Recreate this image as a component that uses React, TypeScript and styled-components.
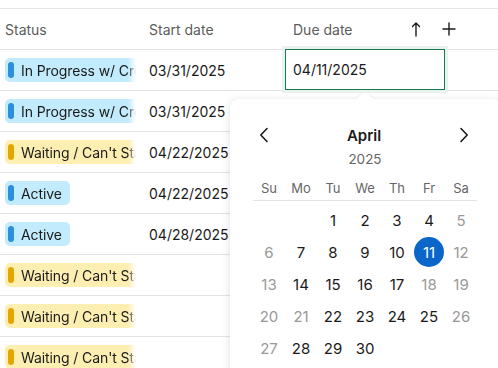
import React from "react";
import styled, {createGlobalStyle} from "styled-components";

const Global = createGlobalStyle`
  html, body {
    margin: 0;
    padding: 0;
    background: #fff;
    font-family: Inter, "Noto Sans", sans-serif;
    color: #1a1a1a;
    overflow: hidden;
  }
`

const Page = styled.div`
  position: relative;
  width: 498px;
  height: 368px;
  overflow: hidden;
  padding-top: 8px;
  box-sizing: border-box;
`

const Grid = styled.div`
  display: grid;
  grid-template-columns: 144px 144px 1fr;
  border-top: 1px solid #e6e6e6;
`

const HeadCell = styled.div`
  height: 40px;
  display: flex;
  align-items: center;
  padding-left: 5px;
  font-size: 14px;
  color: #5c5c5c;
  border-bottom: 1px solid #e3e3e3;
`

const HeadTools = styled.div`
  margin-left: auto;
  display: flex;
  align-items: center;
  gap: 19px;
  padding-right: 42px;
  color: #1a1a1a;
`

const Cell = styled.div`
  height: 40px;
  display: flex;
  align-items: center;
  padding-left: 5px;
  font-size: 14px;
  border-bottom: 1px solid #e3e3e3;
  overflow: hidden;
  white-space: nowrap;
`

const PillClip = styled.div`
  width: 131px;
  overflow: hidden;
  display: flex;
  -webkit-mask-image: linear-gradient(to right, #000 123px, transparent 131px);
  mask-image: linear-gradient(to right, #000 123px, transparent 131px);
`

const Pill = styled.div<{ $tone: "blue" | "yellow" }>`
  flex: none;
  display: flex;
  align-items: center;
  height: 24px;
  padding: 0 8px 0 3px;
  border-radius: 5px;
  box-sizing: border-box;
  background: ${p => p.$tone === "blue" ? "#c2ebfd" : "#fdeeb1"};
`

const PillBar = styled.span<{ $tone: "blue" | "yellow" }>`
  flex: none;
  width: 6px;
  height: 16px;
  border-radius: 3px;
  margin-right: 7px;
  background: ${p => p.$tone === "blue" ? "#2b8fdb" : "#e2a600"};
`

const PillText = styled.span`
  white-space: nowrap;
  color: #1a1a1a;
  letter-spacing: -0.1px;
`

const Editor = styled.div`
  position: absolute;
  left: 285px;
  top: 49px;
  width: 160px;
  height: 41px;
  box-sizing: border-box;
  border: 1px solid #197a52;
  box-shadow: 0 0 0 3px #eaf2ef;
  background: #fff;
  display: flex;
  align-items: center;
  padding-left: 7px;
  font-size: 14px;
  z-index: 3;
`

const Popover = styled.div`
  position: absolute;
  left: 230px;
  top: 99px;
  width: 272px;
  height: 290px;
  background: #fff;
  border-radius: 8px;
  box-shadow: 0 2px 10px rgba(0, 0, 0, 0.12), 0 0 1px rgba(0, 0, 0, 0.1);
  padding: 24px 0 0 23px;
  box-sizing: border-box;
  z-index: 2;

  &::before {
    content: "";
    position: absolute;
    left: 129px;
    top: -6px;
    width: 12px;
    height: 12px;
    background: #fff;
    transform: rotate(45deg);
    box-shadow: -1px -1px 2px rgba(0, 0, 0, 0.05);
  }
`

const Calendar = styled.div`
  width: 224px;
  position: relative;
`

const Nav = styled.div`
  display: flex;
  align-items: center;
  justify-content: space-between;
  height: 24px;
  padding: 0 8px 0 6px;
`

const Month = styled.div`
  font-size: 15px;
  font-weight: 600;
`

const NavButton = styled.div`
  display: flex;
  align-items: center;
  color: #1a1a1a;
`

const Year = styled.div`
  margin-top: 2px;
  height: 20px;
  line-height: 20px;
  text-align: center;
  font-size: 13.5px;
  color: #666;
`

const WeekRow = styled.div`
  margin-top: 7px;
  display: grid;
  grid-template-columns: repeat(7, 32px);
  height: 24px;
  align-items: center;
  border-bottom: 1px solid #e3e3e3;
`

const WeekDay = styled.div`
  text-align: center;
  font-size: 13px;
  color: #666;
`

const Days = styled.div`
  margin-top: 3px;
  display: grid;
  grid-template-columns: repeat(7, 32px);
  grid-auto-rows: 32px;
`

const Day = styled.div<{ $muted?: boolean; $selected?: boolean }>`
  display: flex;
  align-items: center;
  justify-content: center;
  font-size: 15px;
  color: ${p => p.$selected ? "#fff" : p.$muted ? "#999" : "#1a1a1a"};

  span {
    width: 30px;
    height: 30px;
    border-radius: 50%;
    display: flex;
    align-items: center;
    justify-content: center;
    background: ${p => p.$selected ? "#0a66c9" : "transparent"};
  }
`

type Row = { status: string; tone: "blue" | "yellow"; start: string };

const rows: Row[] = [
    {status: "In Progress w/ Creative", tone: "blue", start: "03/31/2025"},
    {status: "In Progress w/ Creative", tone: "blue", start: "03/31/2025"},
    {status: "Waiting / Can't Start", tone: "yellow", start: "04/22/2025"},
    {status: "Active", tone: "blue", start: "04/22/2025"},
    {status: "Active", tone: "blue", start: "04/28/2025"},
    {status: "Waiting / Can't Start", tone: "yellow", start: ""},
    {status: "Waiting / Can't Start", tone: "yellow", start: ""},
    {status: "Waiting / Can't Start", tone: "yellow", start: ""},
];

const muted = [5, 6, 12, 13, 18, 19, 20, 21, 26, 27];

const Chevron = ({dir}: { dir: "left" | "right" }) => (
    <svg width="10" height="16" viewBox="0 0 10 16" fill="none" stroke="currentColor" strokeWidth="1.6"
         strokeLinecap="round" strokeLinejoin="round">
        {dir === "left" ? <path d="M8 1.5 1.8 8 8 14.5"/> : <path d="M2 1.5 8.2 8 2 14.5"/>}
    </svg>
)

const App = () => {
    const cells: (number | null)[] = [null, null];
    for (let d = 1; d <= 30; d++) cells.push(d);

    return (
        <Page>
            <Global/>
            <Grid>
                <HeadCell>Status</HeadCell>
                <HeadCell>Start date</HeadCell>
                <HeadCell>
                    Due date
                    <HeadTools>
                        <svg width="14" height="16" viewBox="0 0 14 16" fill="none" stroke="currentColor"
                             strokeWidth="1.4" strokeLinecap="round" strokeLinejoin="round">
                            <path d="M7 2v13M3.5 5.5 7 2l3.5 3.5"/>
                        </svg>
                        <svg width="14" height="14" viewBox="0 0 14 14" fill="none" stroke="currentColor"
                             strokeWidth="1.4" strokeLinecap="round">
                            <path d="M7 1v12M1 7h12"/>
                        </svg>
                    </HeadTools>
                </HeadCell>
                {rows.map((r, i) => (
                    <React.Fragment key={i}>
                        <Cell>
                            <PillClip>
                                <Pill $tone={r.tone}>
                                    <PillBar $tone={r.tone}/>
                                    <PillText>{r.status}</PillText>
                                </Pill>
                            </PillClip>
                        </Cell>
                        <Cell>{r.start}</Cell>
                        <Cell/>
                    </React.Fragment>
                ))}
            </Grid>

            <Editor>04/11/2025</Editor>

            <Popover>
                <Calendar>
                    <Nav>
                        <NavButton><Chevron dir="left"/></NavButton>
                        <Month>April</Month>
                        <NavButton><Chevron dir="right"/></NavButton>
                    </Nav>
                    <Year>2025</Year>
                    <WeekRow>
                        {["Su", "Mo", "Tu", "We", "Th", "Fr", "Sa"].map(w => <WeekDay key={w}>{w}</WeekDay>)}
                    </WeekRow>
                    <Days>
                        {cells.map((d, i) => (
                            <Day key={i} $muted={d !== null && muted.includes(d)} $selected={d === 11}>
                                {d !== null && <span>{d}</span>}
                            </Day>
                        ))}
                    </Days>
                </Calendar>
            </Popover>
        </Page>
    )
}

export default App;
